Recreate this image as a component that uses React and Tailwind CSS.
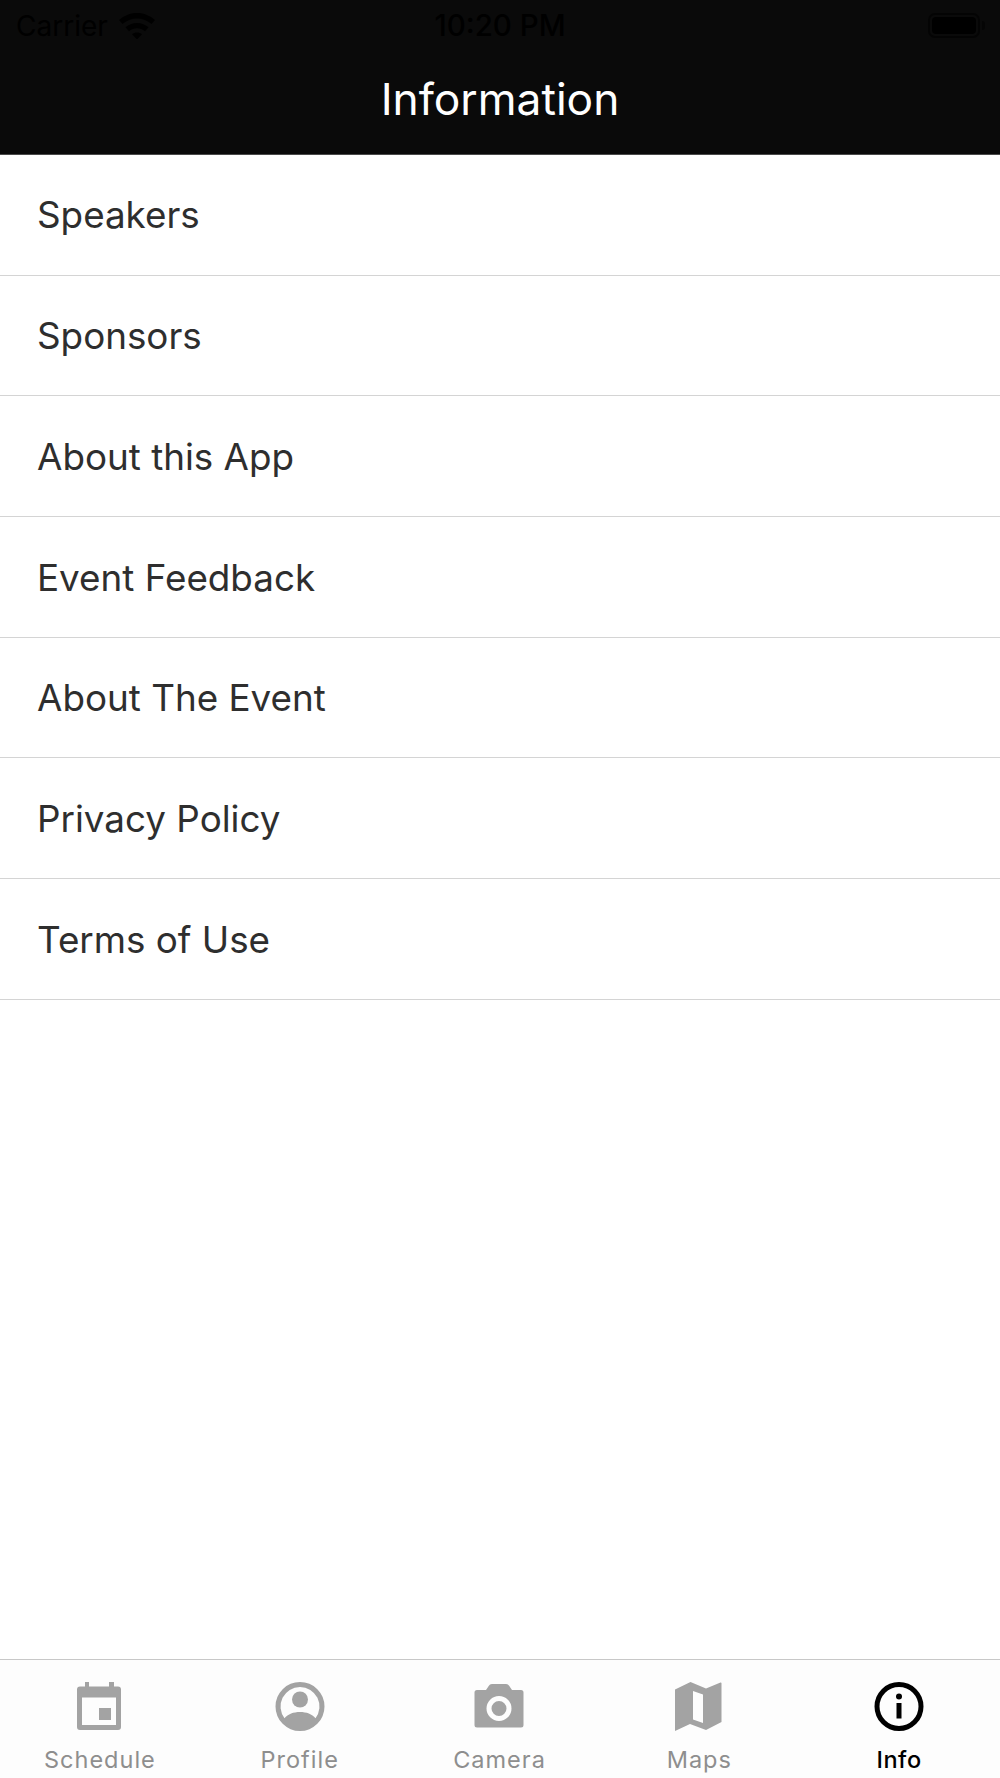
const rows = ["Speakers", "Sponsors", "About this App", "Event Feedback", "About The Event", "Privacy Policy", "Terms of Use"];

const CalendarIcon = () => (
  <svg width="50" height="50" viewBox="0 0 50 50" fill="#a3a3a3">
    <path fillRule="evenodd" d="M10 1h4v4.500h20V1h5v4.500h4a3 3 0 0 1 3 3V46a3 3 0 0 1-3 3H5a3 3 0 0 1-3-3V8.500a3 3 0 0 1 3-3h5V1zM7 16.500V44h34V16.500H7zM24 27h12v12H24V27z" />
  </svg>
);
const ProfileIcon = () => (
  <svg width="50" height="50" viewBox="0 0 50 50" fill="#a3a3a3">
    <path fillRule="evenodd" d="M25 1a24.500 24.500 0 1 1 0 49 24.500 24.500 0 0 1 0-49zm0 5a19.500 19.500 0 0 0-15.500 31.300C13 33 18.500 31 25 31s12 2 15.500 6.300A19.500 19.500 0 0 0 25 6z" />
    <circle cx="25" cy="18.500" r="8" />
  </svg>
);
const CameraIcon = () => (
  <svg width="50" height="50" viewBox="0 0 50 50" fill="#a3a3a3">
    <path fillRule="evenodd" d="M18 3h14c1.500 0 2.500.7 3.300 2l2.700 4h9a2.500 2.500 0 0 1 2.500 2.500V44a2.500 2.500 0 0 1-2.500 2.500H3A2.500 2.500 0 0 1 .5 44V11.500A2.500 2.500 0 0 1 3 9h9l2.700-4c.8-1.300 1.800-2 3.300-2zM25 15a12.500 12.500 0 1 0 0 25 12.500 12.500 0 0 0 0-25zm0 5a7.500 7.500 0 1 1 0 15 7.500 7.500 0 0 1 0-15z" />
  </svg>
);
const MapIcon = () => (
  <svg width="50" height="50" viewBox="0 0 50 50" fill="#a3a3a3">
    <path fillRule="evenodd" d="M17.500 1L33 7.500 47.500 1.500c.6-.2 1 .2 1 .8V41l-15.500 8-16-6-15 7V8.500L17.500 1zM20 10v28.500l10 3.500V13.500L20 10z" transform="translate(-1 0)" />
  </svg>
);
const InfoIcon = () => (
  <svg width="50" height="50" viewBox="0 0 50 50" fill="#000">
    <path fillRule="evenodd" d="M25 1a24.500 24.500 0 1 1 0 49 24.500 24.500 0 0 1 0-49zm0 5a19.500 19.500 0 1 0 0 39 19.500 19.500 0 0 0 0-39z" />
    <circle cx="25" cy="15.500" r="3" />
    <rect x="22.500" y="22" width="5" height="15.500" />
  </svg>
);

const tabs = [
  { label: "Schedule", Icon: CalendarIcon },
  { label: "Profile", Icon: ProfileIcon },
  { label: "Camera", Icon: CameraIcon },
  { label: "Maps", Icon: MapIcon },
  { label: "Info", Icon: InfoIcon, active: true },
];

export default function App() {
  return (
    <div className="h-[1778px] w-[1000px] flex flex-col bg-white overflow-hidden font-['Inter','Liberation_Sans',sans-serif]">
      <header className="h-[155px] shrink-0 bg-[#0a0a0a] border-b border-[#4a4a4a]">
        <div className="h-[50px] flex items-center justify-between pl-[16px] pr-[13px] pt-[1px] text-[#000] text-[28px] leading-none">
          <div className="flex items-center gap-[11px] w-[320px]">
            <span>Carrier</span>
            <svg width="36" height="26" viewBox="0 0 36 26" fill="#000">
              <path d="M18 0c7 0 13 2.700 18 7l-3.500 4C28.500 7.500 23.500 5.500 18 5.500S7.500 7.500 3.500 11L0 7C5 2.700 11 0 18 0z" />
              <path d="M18 10c4.500 0 8.300 1.600 11.500 4.300L26 18.300c-2.200-1.800-5-3-8-3s-5.800 1.200-8 3l-3.500-4C9.700 11.600 13.500 10 18 10z" />
              <path d="M18 19.500c2 0 3.500.6 5 1.800L18 26.500l-5-5.200c1.500-1.200 3-1.800 5-1.800z" />
            </svg>
          </div>
          <span className="font-medium text-[29.500px] pr-[3px]">10:20 PM</span>
          <div className="w-[320px] flex justify-end items-center pr-[2px]">
            <div className="w-[52px] h-[25px] rounded-[7px] border-[2px] border-[#000]/60 p-[2px]">
              <div className="w-full h-full rounded-[4px] bg-[#000]" />
            </div>
            <div className="w-[3px] h-[9px] rounded-r-full bg-[#000]/50 ml-[2px]" />
          </div>
        </div>
        <h1 className="text-center text-white font-normal text-[44.300px] leading-[50px] mt-[24px]">Information</h1>
      </header>

      <main className="flex-1 flex flex-col">
        {rows.map((r) => (
          <div key={r} className="h-[120.7px] shrink-0 border-b border-[#d4d4d4] flex items-center pl-[37px] pt-[2px] text-[#2e2e2e] text-[36.800px] leading-none">
            {r}
          </div>
        ))}
      </main>

      <nav className="h-[119px] shrink-0 border-t border-[#c8c8c8] bg-[#fdfdfd] grid grid-cols-5 pr-[1px]">
        {tabs.map(({ label, Icon, active }) => (
          <div key={label} className="flex flex-col items-center pt-[21px]">
            <Icon />
            <span className={`mt-[16px] text-[23.500px] leading-[26px] ${active ? "text-black font-medium tracking-[0.5px]" : "text-[#8e8e8e] tracking-[1px]"}`}>{label}</span>
          </div>
        ))}
      </nav>
    </div>
  );
}
